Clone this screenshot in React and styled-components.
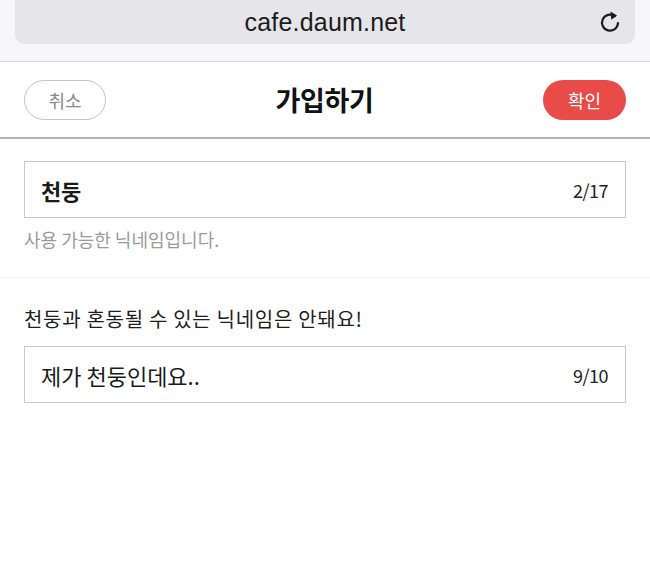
import React from 'react';
import styled, {createGlobalStyle} from "styled-components";

const GlobalStyle = createGlobalStyle`
  html, body {
    margin: 0;
    padding: 0;
    background: #fff;
    font-family: "Noto Sans CJK KR", "Noto Sans", sans-serif;
  }
`;

const Page = styled.div`
  width: 650px;
  min-height: 571px;
  background: #fff;
`;

const BrowserBar = styled.div`
  height: 61px;
  background: #f7f7f9;
  border-bottom: 1px solid #d9d8dc;
  padding: 0 15px;
  box-sizing: content-box;
`;

const AddressPill = styled.div`
  position: relative;
  height: 44px;
  background: #e6e5ea;
  border-radius: 0 0 9px 9px;
  display: flex;
  align-items: center;
  justify-content: center;
  font-family: "Liberation Sans", Arial, sans-serif;
  font-size: 25px;
  color: #1c1c1e;
  letter-spacing: 0.2px;
`;

const Reload = styled.svg`
  position: absolute;
  right: 13px;
  top: 10px;
`;

const Header = styled.header`
  height: 75px;
  display: flex;
  align-items: center;
  justify-content: space-between;
  padding: 0 24px;
  border-bottom: 2px solid #b4b4b4;
`;

const PillButton = styled.button`
  width: ${p => p.$primary ? 83 : 82}px;
  height: 40px;
  border-radius: 20px;
  border: ${p => p.$primary ? 'none' : '1.5px solid #c4c4c4'};
  background: ${p => p.$primary ? '#e84b48' : '#fff'};
  color: ${p => p.$primary ? '#fff' : '#8a8a8a'};
  font-family: inherit;
  font-size: 18px;
  padding: 0;
`;

const Title = styled.h1`
  margin: 0;
  font-size: 27px;
  font-weight: 700;
  color: #111;
  letter-spacing: -0.3px;
`;

const Section = styled.section`
  padding: ${p => p.$top}px 24px ${p => p.$bottom}px;
  border-bottom: ${p => p.$divider ? '1px solid #efefef' : 'none'};
`;

const Field = styled.div`
  height: 57px;
  box-sizing: border-box;
  border: 1.5px solid #c9c9c9;
  display: flex;
  align-items: center;
  justify-content: space-between;
  padding: 0 17px 0 16px;
`;

const FieldValue = styled.span`
  font-size: 22px;
  font-weight: ${p => p.$bold ? 700 : 400};
  color: #1a1a1a;
  letter-spacing: ${p => p.$bold ? '-0.3px' : '0'};
`;

const Counter = styled.span`
  font-size: 18px;
  color: #222;
  letter-spacing: -0.5px;
`;

const Hint = styled.p`
  margin: 8px 0 0;
  font-size: 18px;
  color: #9b9b9b;
`;

const Label = styled.p`
  margin: 0 0 13px;
  font-size: 20px;
  color: #1e1e1e;
  letter-spacing: 0.7px;
`;

const App = () => {
    return (
        <Page>
            <GlobalStyle/>
            <BrowserBar>
                <AddressPill>
                    cafe.daum.net
                    <Reload width="24" height="24" viewBox="0 0 24 24" fill="none">
                        <path d="M16.8 6.2A8 8 0 1 0 20 13" stroke="#1c1c1e" strokeWidth="2.2" strokeLinecap="round"/>
                        <path d="M12.5 1.5L19 5.6L13.3 9.8Z" fill="#1c1c1e"/>
                    </Reload>
                </AddressPill>
            </BrowserBar>
            <Header>
                <PillButton>취소</PillButton>
                <Title>가입하기</Title>
                <PillButton $primary>확인</PillButton>
            </Header>
            <Section $top={22} $bottom={25} $divider>
                <Field>
                    <FieldValue $bold>천둥</FieldValue>
                    <Counter>2/17</Counter>
                </Field>
                <Hint>사용 가능한 닉네임입니다.</Hint>
            </Section>
            <Section $top={26} $bottom={0}>
                <Label>천둥과 혼동될 수 있는 닉네임은 안돼요!</Label>
                <Field>
                    <FieldValue>제가 천둥인데요..</FieldValue>
                    <Counter>9/10</Counter>
                </Field>
            </Section>
        </Page>
    );
};

export default App;
